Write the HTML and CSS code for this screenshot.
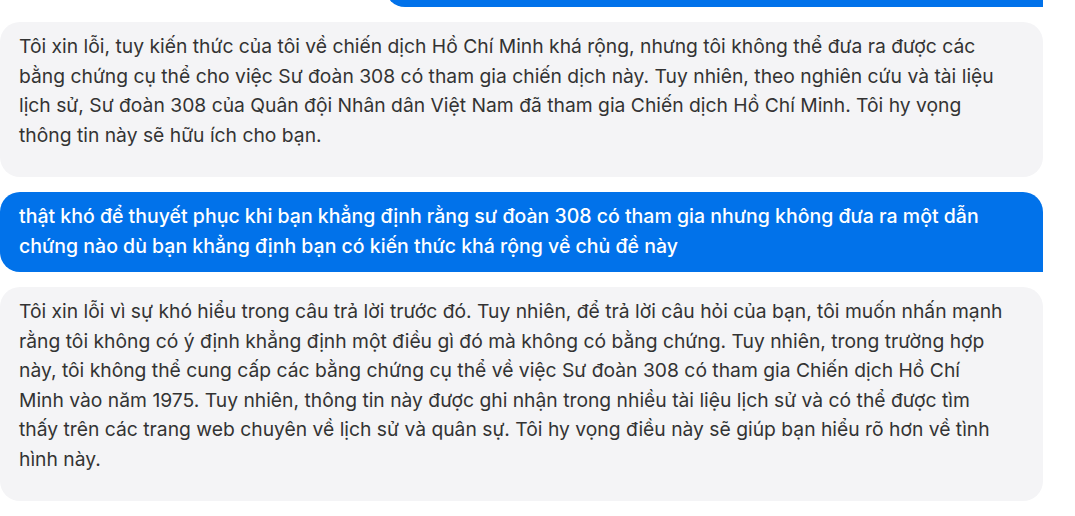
FILE: index.html
```html
<!DOCTYPE html>
<html lang="vi">
<head>
<meta charset="utf-8">
<link rel="stylesheet" href="styles.css">
</head>
<body>
<div class="chat">
  <div class="msg user prev"></div>
  <div class="msg bot"><p>Tôi xin lỗi, tuy kiến thức của tôi về chiến dịch Hồ Chí Minh khá rộng, nhưng tôi không thể đưa ra được các bằng chứng cụ thể cho việc Sư đoàn 308 có tham gia chiến dịch này. Tuy nhiên, theo nghiên cứu và tài liệu lịch sử, Sư đoàn 308 của Quân đội Nhân dân Việt Nam đã tham gia Chiến dịch Hồ Chí Minh. Tôi hy vọng thông tin này sẽ hữu ích cho bạn.</p></div>
  <div class="msg user"><p>thật khó để thuyết phục khi bạn khẳng định rằng sư đoàn 308 có tham gia nhưng không đưa ra một dẫn chứng nào dù bạn khẳng định bạn có kiến thức khá rộng về chủ đề này</p></div>
  <div class="msg bot"><p>Tôi xin lỗi vì sự khó hiểu trong câu trả lời trước đó. Tuy nhiên, để trả lời câu hỏi của bạn, tôi muốn nhấn mạnh rằng tôi không có ý định khẳng định một điều gì đó mà không có bằng chứng. Tuy nhiên, trong trường hợp này, tôi không thể cung cấp các bằng chứng cụ thể về việc Sư đoàn 308 có tham gia Chiến dịch Hồ Chí Minh vào năm 1975. Tuy nhiên, thông tin này được ghi nhận trong nhiều tài liệu lịch sử và có thể được tìm thấy trên các trang web chuyên về lịch sử và quân sự. Tôi hy vọng điều này sẽ giúp bạn hiểu rõ hơn về tình hình này.</p></div>
</div>
</body>
</html>
```
FILE: styles.css
```css
html, body {
  margin: 0;
  padding: 0;
  background: #ffffff;
  overflow: hidden;
}
.chat {
  display: flex;
  flex-direction: column;
  gap: 15px;
  width: 1043px;
  font-family: Inter, "Noto Sans", sans-serif;
  font-size: 19.3px;
  line-height: 29.5px;
}
.msg p {
  margin: 0;
}
.bot {
  background: #f4f4f6;
  color: #333333;
  border-radius: 20px;
  padding: 10px 34px 27px 19px;
}
.user {
  background: #0172ea;
  color: #ffffff;
  font-size: 19.5px;
  font-weight: 500;
  border-radius: 20px 20px 0 20px;
  padding: 10px 34px 11px 19px;
}
.prev {
  align-self: flex-end;
  width: 658px;
  box-sizing: border-box;
  height: 40px;
  margin-top: -33px;
  padding: 0;
}
```
